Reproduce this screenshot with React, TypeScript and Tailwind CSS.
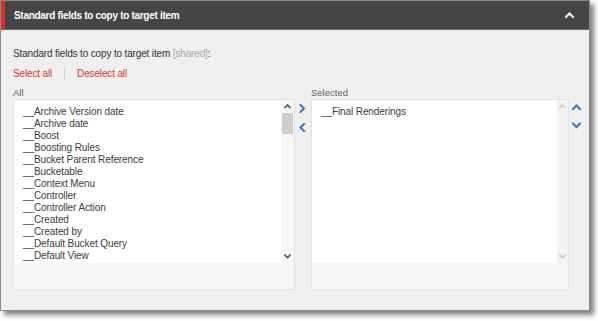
const allFields = [
    "__Archive Version date",
    "__Archive date",
    "__Boost",
    "__Boosting Rules",
    "__Bucket Parent Reference",
    "__Bucketable",
    "__Context Menu",
    "__Controller",
    "__Controller Action",
    "__Created",
    "__Created by",
    "__Default Bucket Query",
    "__Default View",
];

const selectedFields = ["__Final Renderings"];

// small chevrons drawn to match the Sitecore-style arrows
const Chevron = ({ dir, className }: { dir: "up" | "down" | "left" | "right"; className?: string }) => {
    const vertical = dir === "up" || dir === "down";
    const points = {
        up: "1,5 4.5,1.5 8,5",
        down: "1,1.5 4.5,5 8,1.5",
        right: "1.5,1 5,4.5 1.5,8",
        left: "5,1 1.5,4.5 5,8",
    }[dir];
    return (
        <svg
            width={vertical ? 9 : 7}
            height={vertical ? 7 : 9}
            viewBox={vertical ? "0 0 9 7" : "0 0 7 9"}
            className={className}
        >
            <polyline points={points} fill="none" stroke="currentColor" strokeWidth={2} strokeLinecap="square" />
        </svg>
    );
};

const Scrollbar = ({ disabled }: { disabled?: boolean }) => {
    const arrow = disabled ? "text-[#c8c8c8]" : "text-[#4a4a4a]";
    return (
        <div className={`flex flex-col shrink-0 ${disabled ? "w-[11px] bg-[#f2f2f2]" : "w-[13px] bg-[#f7f7f7]"}`}>
            <div className={`h-[13px] flex items-center justify-center ${arrow}`}>
                <Chevron dir="up" className="scale-75" />
            </div>
            {!disabled && <div className="h-[21px] mx-[1px] bg-[#cdcdcd]" />}
            <div className="flex-1" />
            <div className={`h-[13px] flex items-center justify-center ${arrow}`}>
                <Chevron dir="down" className="scale-75" />
            </div>
        </div>
    );
};

const ListBox = ({ items, disabledScroll, width }: { items: string[]; disabledScroll?: boolean; width: string }) => (
    <div className={`${width} h-[191px] flex flex-col border border-[#e2e2e2] bg-[#f6f6f6]`}>
        <div className="flex h-[163px] bg-white">
            <div className="flex-1 pt-[6px] pl-[9px] text-[10px] leading-[12px] tracking-[-0.1px] text-[#3c3c3c]">
                {items.map((f) => (
                    <div key={f}>{f}</div>
                ))}
            </div>
            <Scrollbar disabled={disabledScroll} />
        </div>
    </div>
);

export default function App() {
    return (
        <div className="w-[598px] h-[321px] bg-white" style={{ fontFamily: '"Liberation Sans", Arial, sans-serif' }}>
            <div className="w-[590px] h-[311px] border border-[#8a8a8a] bg-[#efefef] shadow-[4px_4px_5px_rgba(0,0,0,0.5)] flex flex-col">
                {/* header */}
                <div className="h-[29px] bg-[#454545] border-l-[4px] border-[#d3312c] border-b border-b-[#6a6a6a] flex items-center justify-between pl-[9px] pr-[15px]">
                    <span className="text-white font-bold text-[10px] tracking-[-0.3px]">Standard fields to copy to target item</span>
                    <Chevron dir="up" className="text-white" />
                </div>

                <div className="flex flex-col pl-[12px] pt-[17px]">
                    <div className="text-[10px] leading-[13px] tracking-[-0.15px] text-[#333]">
                        Standard fields to copy to target item <span className="text-[#a8a8a8]">[shared]</span>:
                    </div>
                    <div className="flex items-center mt-[7px] text-[10px] leading-[13px] tracking-[-0.15px] text-[#e0352f]">
                        <span>Select all</span>
                        <span className="w-px h-[12px] bg-[#d0d0d0] mx-[12px]" />
                        <span>Deselect all</span>
                    </div>

                    <div className="flex mt-[6px]">
                        <div className="flex flex-col">
                            <div className="text-[9.5px] leading-[13px] text-[#666]">All</div>
                            <ListBox items={allFields} width="w-[282px]" />
                        </div>
                        <div className="w-[16px] pt-[18px] pl-[4px] flex flex-col text-[#3a76b8]">
                            <Chevron dir="right" />
                            <Chevron dir="left" className="mt-[10px]" />
                        </div>
                        <div className="flex flex-col">
                            <div className="text-[9.5px] leading-[13px] text-[#666]">Selected</div>
                            <ListBox items={selectedFields} disabledScroll width="w-[258px]" />
                        </div>
                        <div className="w-[20px] pt-[18px] pl-[3px] flex flex-col text-[#3a76b8]">
                            <Chevron dir="up" />
                            <Chevron dir="down" className="mt-[11px]" />
                        </div>
                    </div>
                </div>
            </div>
        </div>
    );
}
